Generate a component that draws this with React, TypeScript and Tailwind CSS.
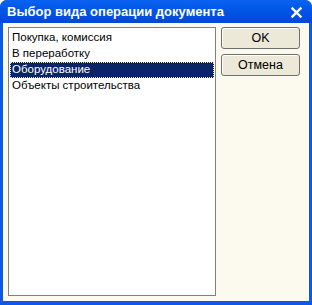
const items = ["Покупка, комиссия", "В переработку", "Оборудование", "Объекты строительства"];

export default function App() {
  return (
    <div className="w-[312px] h-[305px] flex flex-col bg-[#0A5AE6] rounded-t-[7px] overflow-hidden">
      <div className="h-[23px] shrink-0 flex items-center justify-between pl-[7px] pr-[10px] bg-gradient-to-b from-[#0A63F0] via-[#0054E3] to-[#0448D8]">
        <span className="text-white font-bold text-[13px] font-['Liberation_Sans',sans-serif] mt-[1px]">
          Выбор вида операции документа
        </span>
        <svg width="11" height="11" viewBox="0 0 11 11" className="mt-[2px]">
          <path d="M1.5 1.5 L9.5 9.5 M9.5 1.5 L1.5 9.5" stroke="white" strokeWidth="2.4" strokeLinecap="square" />
        </svg>
      </div>
      <div className="flex-1 mx-[3px] mb-[4px] bg-[#FCF9EF] flex pt-[4px] pl-[5px] pr-[9px] pb-[5px] gap-[5px]">
        <div className="w-[211px] border border-[#808080] bg-white pt-[2px] px-[1px] font-['Liberation_Sans',sans-serif] text-[11.5px] text-black">
          {items.map((item, i) => (
            <div
              key={item}
              className={
                i === 2
                  ? "h-[16px] flex items-center pl-[2px] bg-[#0A246A] text-white outline outline-1 outline-dotted outline-[#F0E6A0] -outline-offset-1"
                  : "h-[16px] flex items-center pl-[2px]"
              }
            >
              {item}
            </div>
          ))}
        </div>
        <div className="flex flex-col gap-[5px] font-['Liberation_Sans',sans-serif] text-[12.5px] text-black">
          <button className="w-[79px] h-[22px] rounded-[3px] border border-[#6F6F6F] bg-[#ECE9D8] shadow-[inset_1px_1px_0_#fff]">
            OK
          </button>
          <button className="w-[79px] h-[22px] rounded-[3px] border border-[#6F6F6F] bg-[#ECE9D8] shadow-[inset_1px_1px_0_#fff]">
            Отмена
          </button>
        </div>
      </div>
    </div>
  );
}
